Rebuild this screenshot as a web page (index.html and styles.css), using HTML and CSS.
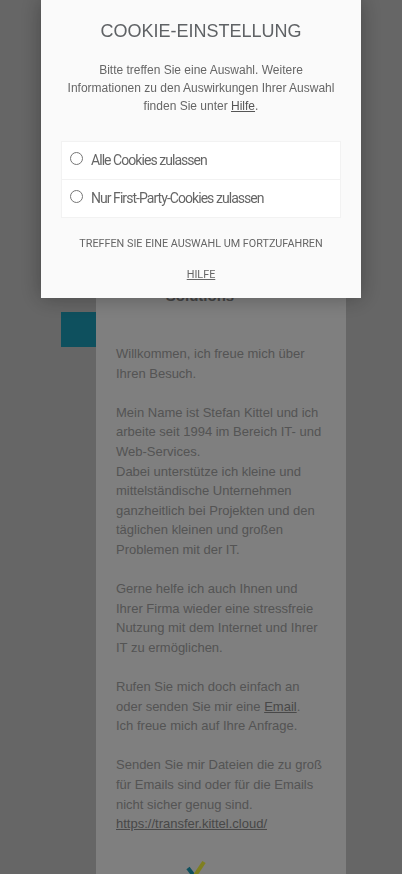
FILE: index.html
```html
<!DOCTYPE html>
<html lang="de">
<head>
<meta charset="utf-8">
<title>Kittel Solutions</title>
<link rel="stylesheet" href="styles.css">
</head>
<body>
<div class="page">
  <div class="accent"></div>
  <main class="content">
    <h1 class="heading">Solutions</h1>
    <p>Willkommen, ich freue mich über Ihren Besuch.</p>
    <p>Mein Name ist Stefan Kittel und ich arbeite seit 1994 im Bereich IT- und Web-Services.<br>Dabei unterstütze ich kleine und mittelständische Unternehmen ganzheitlich bei Projekten und den täglichen kleinen und großen Problemen mit der IT.</p>
    <p>Gerne helfe ich auch Ihnen und Ihrer Firma wieder eine stressfreie Nutzung mit dem Internet und Ihrer IT zu ermöglichen.</p>
    <p>Rufen Sie mich doch einfach an oder senden Sie mir eine <a href="#">Email</a>.<br>Ich freue mich auf Ihre Anfrage.</p>
    <p>Senden Sie mir Dateien die zu groß für Emails sind oder für die Emails nicht sicher genug sind.<br><a href="#">https://transfer.kittel.cloud/</a></p>
    <svg class="logo" width="60" height="30" viewBox="0 0 60 30">
      <path d="M19 15l6 8" stroke="#1da0bc" stroke-width="4" fill="none"/>
      <path d="M25 24L35 9" stroke="#ffff40" stroke-width="4" fill="none"/>
    </svg>
  </main>
</div>
<div class="overlay"></div>
<section class="modal">
  <h2 class="modal-title">Cookie-Einstellung</h2>
  <p class="modal-text">Bitte treffen Sie eine Auswahl. Weitere Informationen zu den Auswirkungen Ihrer Auswahl finden Sie unter <a href="#">Hilfe</a>.</p>
  <div class="options">
    <label class="option"><input type="radio" name="cookies"><span>Alle Cookies zulassen</span></label>
    <label class="option"><input type="radio" name="cookies"><span>Nur First-Party-Cookies zulassen</span></label>
  </div>
  <p class="modal-note">Treffen Sie eine Auswahl um fortzufahren</p>
  <a class="modal-help" href="#">Hilfe</a>
</section>
</body>
</html>
```
FILE: styles.css
```css
* { box-sizing: border-box; }
html, body { margin: 0; height: 100%; overflow: hidden; }
body { background: #ccc; font-family: "Liberation Sans", Arial, sans-serif; color: #a8a8a8; }
.page { display: flex; padding-left: 61px; height: 874px; overflow: hidden; }
.accent { width: 35px; height: 35px; margin-top: 312px; background: #1da0bc; }
.content { width: 250px; background: #fff; padding: 286px 20px 0; font-size: 13px; line-height: 19.6px; flex: none; }
.heading { margin: 0 0 38px -42px; font-size: 15px; line-height: 20px; text-align: center; font-weight: bold; color: #888; }
.content p { margin: 0 0 19.6px; }
.content a { color: #909090; }
.logo { display: block; margin: 0 0 0 53px; }
.overlay { position: fixed; inset: 0; background: rgba(0,0,0,.5); }
.modal { position: fixed; left: 41px; top: 0; width: 320px; height: 298px; padding: 20px 20px 0; background: #fafafa; box-shadow: 0 0 20px rgba(0,0,0,.3); text-align: center; color: #666; }
.modal-title { margin: 0 0 19px; font-size: 18px; line-height: 22px; font-weight: normal; text-transform: uppercase; color: #5f6265; }
.modal-text { margin: 0 0 26px; font-size: 12px; line-height: 18px; }
.modal-text a { color: #555; }
.options { border: 1px solid #f2f2f2; background: #fff; text-align: left; }
.option { display: flex; align-items: center; height: 37px; padding: 0 0 2px 8px; font-family: Roboto, sans-serif; font-size: 14px; letter-spacing: -.95px; color: #666; }
.option + .option { height: 38px; border-top: 1px solid #f2f2f2; }
.option input { width: 13px; height: 13px; margin: 0 8px 3px 0; }
.modal-note { margin: 19px 0 0; font-family: Roboto, sans-serif; font-size: 10.8px; line-height: 13px; text-transform: uppercase; color: #666; }
.modal-help { display: inline-block; margin-top: 18px; font-family: Roboto, sans-serif; font-size: 10.8px; line-height: 13px; text-transform: uppercase; color: #666; }
```
